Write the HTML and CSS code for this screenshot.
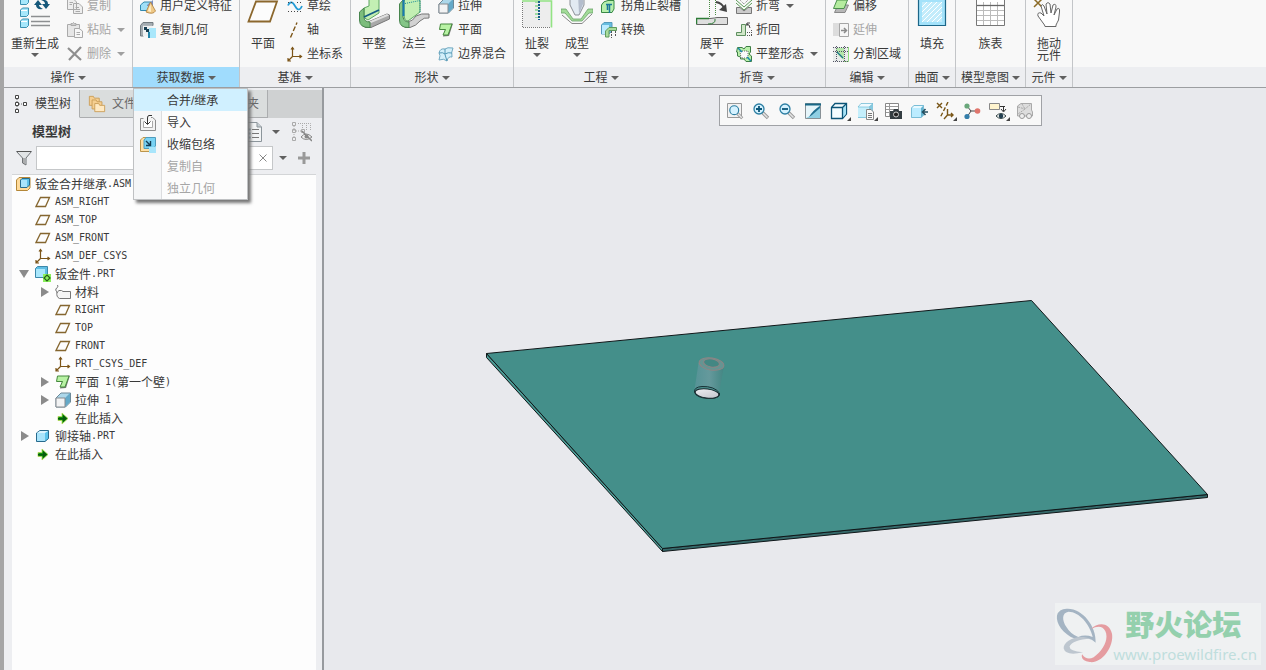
FILE: index.html
```html
<!DOCTYPE html>
<html lang="zh-CN">
<head>
  <meta charset="utf-8">
  <meta name="viewport" content="width=device-width, initial-scale=1">
  <title>钣金合并继承</title>
  <link rel="stylesheet" href="styles.css">
</head>
<body>

<!-- shared icons -->
<svg class="defs" aria-hidden="true">
  <symbol id="plane" viewBox="0 0 16 16"><path d="M1 12.500H10.500L14.500 3.500H5.500Z" fill="none" stroke="#85662f" stroke-width="1.300"/></symbol>
  <symbol id="csys" viewBox="0 0 16 16"><path d="M5.500 2V10.500H14M5.500 10.500L1.500 14.500M4 3.500L5.500 1.500L7 3.500M12.500 9L14.500 10.500L12.500 12M1 12V15H4" fill="none" stroke="#7c5518" stroke-width="1.200"/></symbol>
  <symbol id="cube" viewBox="0 0 16 16"><path d="M1.500 5L5 2.500H13.500V10.500L10 13.500H1.500Z" fill="#5cc4ec" stroke="#276a8d"/><path d="M2 5H10V13H2Z" fill="#a9e4fb"/><path d="M2 5L5 3H13L10 5Z" fill="#dcf5ff"/></symbol>
  <symbol id="insert" viewBox="0 0 16 16"><path d="M3 6.500H7V3L13 8.500L7 14V10.500H3Z" fill="#0b9410" stroke="#b5d957" stroke-width="0.800"/><path d="M3 8H8V5L12 8.500L8 12V9.500H3Z" fill="#075c0c"/></symbol>
  <symbol id="flat" viewBox="0 0 16 16"><path d="M3 3L15 1.500L11 14L5 14.500L7 8L2 8Z" fill="#797979"/><path d="M2.500 2H14L10 13H5L7.500 7.500H1.500Z" fill="#b8f2a4" stroke="#468a3e"/></symbol>
  <symbol id="extrude" viewBox="0 0 16 16"><path d="M1 6L6 1H15.500V10L10.500 15H1Z" fill="#acd7ea" stroke="#6c8998"/><path d="M10 6L15 1V10L10 15Z" fill="#64a9c8"/><path d="M1 6H10V15H1Z" fill="#f2f3f4" stroke="#868b90"/></symbol>
  <symbol id="lens" viewBox="0 0 18 18"><path d="M10.500 10.500L16 16" stroke="#999" stroke-width="3.400"/><path d="M11 11L15.500 15.500" stroke="#e5e5e5" stroke-width="1.500"/><circle cx="7" cy="7" r="5" fill="#d5f2ff" stroke="#2c7ea2" stroke-width="1.300"/></symbol>
</svg>

<div class="app">

  <header class="ribbon">
    <section class="group">
      <div class="tools">
        <button class="big wide">
          <svg viewBox="0 0 32 34"><g fill="#a6e7fb" stroke="#3a8fb0"><path d="M1.500 5L3.500 3H9.500V8.500L7.500 10.500H1.500Z"/><path d="M1.500 16L3.500 14H9.500V20.500L7.500 22.500H1.500Z"/><path d="M1.500 27L3.500 25H9.500V31.500L7.500 33.500H1.500Z"/></g><g stroke="#fff"><path d="M2 5.500H8M2 16.500H8M2 27.500H8"/></g><path d="M15 11L19 6L23 11H20Q20 13 24 15Q17 16 17 11ZM31 10L27 15L23 10H26Q26 7 22 6Q29 5 29 10Z" fill="#15587a"/><path d="M12 22.500H31M12 27.500H31M12 31.500H31" stroke="#8d8f91" stroke-width="1.500"/></svg>
          <span>重新生成</span><i class="caret"></i>
        </button>
        <div class="stack">
          <button class="small" disabled><svg viewBox="0 0 16 16"><path d="M.5 1.500H7L9.500 4V11.500H.5ZM6.500 5.500H12L15.500 9V15.500H6.500Z" fill="#eee" stroke="#aaa"/><path d="M8.500 9.500H12M8.500 11.500H13M8.500 13.500H13M2.500 4.500H6M2.500 6.500H5" stroke="#aaa"/></svg>复制</button>
          <button class="small" disabled><svg viewBox="0 0 16 16"><path d="M.5 2.500H12.500V14.500H.5Z" fill="#e6e6e6" stroke="#aaa"/><path d="M4 3.500V1.500H5.500L6.500 .5L7.500 1.500H9V3.500Z" fill="#ccc" stroke="#aaa"/><path d="M7.500 6.500H12L15.500 9V15.500H7.500Z" fill="#f7f7f7" stroke="#aaa"/><path d="M9.500 10.500H13M9.500 12.500H13" stroke="#aaa"/></svg>粘贴<i class="caret"></i></button>
          <button class="small" disabled><svg viewBox="0 0 16 16"><path d="M1 2L14 14M14 1L2 14" stroke="#8f8f8f" stroke-width="2.200"/></svg>删除<i class="caret"></i></button>
        </div>
      </div>
      <button class="caption">操作<i class="caret"></i></button>
    </section>

    <section class="group open">
      <div class="tools">
        <div class="stack">
          <button class="small"><svg viewBox="0 0 16 16"><path d="M.5 7L4 4H11V10L8 12.500H.5Z" fill="#9fdff7" stroke="#3289ae"/><path d="M7 7L13 2V8H7Z" fill="#7d8fc1"/><path d="M10.500 4L15.500 13Q13 17 6 14Z" fill="#efc987" stroke="#ae7e38" stroke-width=".8"/><path d="M10.500 6L11 14L8 13Z" fill="#fff0cd"/></svg>用户定义特征</button>
          <button class="small"><svg viewBox="0 0 16 16"><path d="M.5 3.500L3 .5H13V3.500H3.500V14H.5Z" fill="#a5adb2" stroke="#737b80"/><path d="M3 3.500H12.500V14H3Z" fill="#eff1f2"/><path d="M4 5H7V7H9V10H6V8H4Z" fill="#173d50"/><path d="M9 6H16V16H9Z" fill="#a9e7fb"/><path d="M8 10H10V16H8Z" fill="#2485aa"/></svg>复制几何</button>
          <span class="small"></span>
        </div>
      </div>
      <button class="caption">获取数据<i class="caret"></i></button>
      <div class="menu">
        <button class="current"><i></i>合并/继承</button>
        <button><svg viewBox="0 0 16 16"><path d="M3.500 3.500H.5V15.500H15.500V5L12.500 2.500H11" fill="#f3f3f3" stroke="#8e8e8e"/><path d="M3.500 6.500V12.500H12.500V6" fill="#fff" stroke="#aaa"/><path d="M12 .5H9Q7.500 .5 7.500 3V9M4.500 6.500L7.500 9.500L10.500 6.500" fill="none" stroke="#333"/></svg>导入</button>
        <button><svg viewBox="0 0 16 16"><path d="M.5 3L3 .5H13V14.500H.5Z" fill="#ffe0a5" stroke="#bb954b"/><path d="M4 3L6 .5H15.500V9L13 11.500H4Z" fill="#79d3f4" stroke="#4f9cbc"/><path d="M6 4L10 8M10.500 4V8.500H6" stroke="#133c53" stroke-width="1.400" fill="none"/><path d="M9 10H16V16H9Z" fill="#a8e5fb"/></svg>收缩包络</button>
        <button disabled><i></i>复制自</button>
        <button disabled><i></i>独立几何</button>
      </div>
    </section>

    <section class="group">
      <div class="tools">
        <button class="big"><svg viewBox="0 0 32 34"><path d="M1.500 27.500H23L30 7.500H9Z" fill="#fcfcfc" stroke="#8b672d" stroke-width="1.800"/></svg><span>平面</span></button>
        <div class="stack">
          <button class="small"><svg viewBox="0 0 16 16"><path d="M1 7.500Q4 1 8 8T15 8" fill="none" stroke="#239bd5" stroke-width="1.700"/><path d="M1 13.500H15M1 4.500H5M10 4.500H15" stroke="#444" stroke-dasharray="1 2"/></svg>草绘</button>
          <button class="small"><svg viewBox="0 0 16 16"><path d="M3.500 15.500L10 .5" stroke="#7c5518" stroke-width="1.400" stroke-dasharray="5 2"/></svg>轴</button>
          <button class="small"><svg><use href="#csys"/></svg>坐标系</button>
        </div>
      </div>
      <button class="caption">基准<i class="caret"></i></button>
    </section>

    <section class="group">
      <div class="tools">
        <button class="big"><svg viewBox="0 0 32 34"><path d="M6 14L11 12V4L21 0V19L10 26Q6 25 6 21Z" fill="#c3efb3" stroke="#5ca561"/><path d="M10 28L29 20L31.500 21V25L13 33.500H7Z" fill="#a9a9a9" stroke="#777"/><path d="M10 28L29 20L31 21.500L13 29Z" fill="#e0e0e0"/><path d="M1.500 18L6 14V23Q6 28 12 28V33.500Q1.500 34 1.500 26Z" fill="#7cbd7c" stroke="#47854d"/><path d="M6 23L21 16" stroke="#145c85" stroke-width="1.800"/></svg><span>平整</span></button>
        <button class="big"><svg viewBox="0 0 32 34"><path d="M6 8L8 2L22 1V18L10 27Q6 27 6 20Z" fill="#c3efb3" stroke="#5ca561"/><path d="M10 28Q15 27 18 22Q23 19 31 20V24Q26 23 22 27Q18 32 12 33.500H7Z" fill="#d2d2d2" stroke="#777"/><path d="M1.500 10L5 6V23Q6 28 11 28V33.500Q1.500 34 1.500 26Z" fill="#84c587" stroke="#47854d"/><path d="M5.500 6V22" stroke="#197ab2" stroke-width="2"/><path d="M7 9.500L22 6.500V19" fill="none" stroke="#168997" stroke-dasharray="1 1"/></svg><span>法兰</span></button>
        <div class="stack">
          <button class="small"><svg><use href="#extrude"/></svg>拉伸</button>
          <button class="small"><svg><use href="#flat"/></svg>平面</button>
          <button class="small"><svg viewBox="0 0 16 16"><path d="M1 7Q2 2 7 3Q9 1 15 2Q13 6 14 11Q10 10 9 15Q6 12 1 14Q3 9 1 7Z" fill="#d3effa" stroke="#72a9c1"/><path d="M7 3Q6 8 9 15M1 7Q5 6 7 8Q10 6 14 7" fill="none" stroke="#5198b6"/></svg>边界混合</button>
        </div>
      </div>
      <button class="caption">形状<i class="caret"></i></button>
    </section>

    <section class="group">
      <div class="tools">
        <button class="big"><svg viewBox="0 0 32 34"><path d="M2 5H30V33H2Z" fill="#ededed"/><path d="M1 7H30.500V33.500" fill="none" stroke="#93e484" stroke-width="1.600"/><path d="M1.500 8V33.500H30" fill="none" stroke="#777" stroke-dasharray="1 1"/><path d="M15.500 7V24" stroke="#9fdca2" stroke-width="3" stroke-dasharray="2 2"/><path d="M18 7V26" stroke="#155e89" stroke-width="2" stroke-dasharray="2 1"/></svg><span>扯裂</span><i class="caret"></i></button>
        <button class="big"><svg viewBox="0 0 32 34"><path d="M0 15H5L12 25H20L27 15H32V19H28L21 27H11L4 19H0Z" fill="#a3db98" stroke="#6ba36a" stroke-width=".8"/><path d="M9 0H23V11L18 21H14L9 11Z" fill="#e2eaf2" stroke="#8b8f96"/><path d="M17 0H22V10L18 20Z" fill="#b4bdcc"/><path d="M1 21L11 29.500H21L31 20" fill="none" stroke="#888"/></svg><span>成型</span><i class="caret"></i></button>
        <div class="stack">
          <button class="small"><svg viewBox="0 0 16 16"><path d="M.5 14.500V7Q2 3 7 2.500H13V11L11 14.500Z" fill="#b7efad" stroke="#398844"/><path d="M5 6.500H11M8.500 7V15M6.500 7V12" stroke="#1c779b" stroke-width="1.500"/></svg>拐角止裂槽</button>
          <button class="small"><svg viewBox="0 0 16 16"><path d="M.5 3L3 .5H11V9L8 12H.5Z" fill="#67bddf" stroke="#569abb"/><path d="M1 3H8V12H1Z" fill="#bcebff"/><path d="M4.500 15V9L8 5.500H15.500V8.500H8V15Z" fill="#a9dc9c" stroke="#5f9b5c"/><path d="M10.500 9V16M14.500 9V15" stroke="#555" stroke-dasharray="2 1"/></svg>转换</button>
          <span class="small"></span>
        </div>
      </div>
      <button class="caption">工程<i class="caret"></i></button>
    </section>

    <section class="group">
      <div class="tools">
        <button class="big"><svg viewBox="0 0 32 34"><path d="M13.500 0V23M19.500 0V21" stroke="#4a8b44" stroke-dasharray="1 1"/><path d="M.5 24.500H14Q19 24 21 23.500H31.500V30.500H.5Z" fill="#dedede" stroke="#666"/><path d="M.5 30V24.500H13" fill="none" stroke="#2e7c37" stroke-width="1.500"/><path d="M19 25Q20 30 12 30" fill="none" stroke="#2e7c37"/><path d="M20 8Q26 9 28 14" fill="none" stroke="#444" stroke-width="2"/><path d="M23 16L31 18L30 10Z" fill="#444"/></svg><span>展平</span><i class="caret"></i></button>
        <div class="stack">
          <button class="small"><svg viewBox="0 0 16 16"><path d="M0 2L8 9L16 2M0 5L8 12L16 5" fill="none" stroke="#5c9c58"/><path d="M3 1L8 6L13 1" fill="none" stroke="#777" stroke-dasharray="1 1"/><path d="M.5 9.500H4L8 13L12 9.500H15.500V15.500H.5Z" fill="#ccc" stroke="#777"/></svg>折弯<i class="caret"></i></button>
          <button class="small"><svg viewBox="0 0 16 16"><path d="M.5 10.500H5.500V2.500H9.500V13.500H.5Z" fill="#d0e6c8" stroke="#5e8f60"/><path d="M11 13.500H16M15.500 8V14M11 10.500H15" stroke="#555" stroke-dasharray="1 1"/><path d="M10 2Q14 2 14 6M11 4V1L14 1" fill="none" stroke="#444"/></svg>折回</button>
          <button class="small"><svg viewBox="0 0 16 16"><path d="M1.500 1.500H6L8 3L10 .5H14.500V6L13 8L15.500 10V15.500H10L8 13H4.500V11L1.500 10V6H.5Z" fill="#b9f0aa" stroke="#3e7e45"/><path d="M4 5H12V12H5Z" fill="#fafafa" stroke="#666" stroke-dasharray="1 1"/><path d="M2 2L6 6M11 11L15 15" stroke="#168aaa" stroke-width="1.500"/></svg>平整形态<i class="caret"></i></button>
        </div>
      </div>
      <button class="caption">折弯<i class="caret"></i></button>
    </section>

    <section class="group">
      <div class="tools">
        <div class="stack">
          <button class="small"><svg viewBox="0 0 16 16"><path d="M5 7H15.500L12 14.500H1.500Z" fill="#b7b7b7" stroke="#888"/><path d="M4 2H14.500L11 10.500H.5Z" fill="#b5ec9f" stroke="#4a8f4c"/></svg>偏移</button>
          <button class="small" disabled><svg viewBox="0 0 16 16"><path d="M0 1H6V14H0Z" fill="#ddd"/><path d="M6.500 1.500H15.500V14.500H6.500Z" fill="#f6f6f6" stroke="#a5a5a5"/><path d="M8 8.500H13M11 6L13.500 8.500L11 11" fill="none" stroke="#8a8a8a" stroke-width="1.500"/></svg>延伸</button>
          <button class="small"><svg viewBox="0 0 16 16"><path d="M0 1H16V16H0Z" fill="#e8ecea"/><path d="M3 2H11V14Q3 9 3 3Z" fill="#b5e8aa"/><path d="M15.500 1V15.500H11" fill="none" stroke="#8fdc7d"/><path d="M0 1.500H16M0 5.500H16M3.500 0V16M11.500 0V16M0 15.500H16" stroke="#556" stroke-dasharray="1 1"/><path d="M4 6L10 12" stroke="#1b7189" stroke-width="1.300"/></svg>分割区域</button>
        </div>
      </div>
      <button class="caption">编辑<i class="caret"></i></button>
    </section>

    <section class="group">
      <div class="tools">
        <button class="big"><svg viewBox="0 0 32 34"><path d="M2.500 4.500H29.500V31.500H2.500Z" fill="#a3e2fa" stroke="#1c6688" stroke-width="1.200"/><path d="M6 8H26V28H6Z" fill="#c2ecfb"/><g stroke="#fff"><path d="M6 13L11 8M6 18L16 8M6 23L21 8M6 28L26 8M11 28L26 13M16 28L26 18M21 28L26 23"/></g></svg><span>填充</span></button>
      </div>
      <button class="caption">曲面<i class="caret"></i></button>
    </section>

    <section class="group">
      <div class="tools center">
        <button class="big"><svg viewBox="0 0 32 34"><path d="M1.500 3.500H29.500V31.500H1.500Z" fill="#fff" stroke="#777"/><path d="M2 16.500H29M2 21.500H29M2 26.500H29M8.500 8V31M15.500 8V31M22.500 8V31" stroke="#bbb"/><path d="M2 11.500H29" stroke="#666" stroke-width="1.300"/></svg><span>族表</span></button>
      </div>
      <button class="caption">模型意图<i class="caret"></i></button>
    </section>

    <section class="group">
      <div class="tools">
        <button class="big"><svg viewBox="0 0 32 34"><path d="M1 5L9 13M9 5L1 13" stroke="#8b6b26" stroke-width="1.500"/><path d="M11.500 31L5 22Q4 18 8 19L11 22L8 12Q9 9 11 12L14 20L13 10Q15 7 17 10L18 19L20 11Q23 9 23 13L21 21L24 15Q27 13 26.500 18L25.500 26Q24 29 23 31V32.500H12Z" fill="#fff" stroke="#666"/></svg><span>拖动<br>元件</span></button>
      </div>
      <button class="caption">元件<i class="caret"></i></button>
    </section>
  </header>

  <div class="workspace">
    <aside class="side">
      <nav class="tabs">
        <button class="tab active"><svg viewBox="0 0 16 18"><path d="M2.500 .5H5.500V3.500H2.500ZM2.500 7.500H5.500V10.500H2.500ZM10.500 7.500H13.500V10.500H10.500ZM2.500 14.500H5.500V17.500H2.500Z" fill="#fff" stroke="#444"/><path d="M4 4V7M4 11V14M6 9H10" stroke="#666" stroke-dasharray="1 1"/></svg>模型树</button>
        <button class="tab"><svg class="folders" viewBox="0 0 20 20"><g fill="#f6cf91" stroke="#c99d57"><path d="M1.500 1.500H6L7 3.500H12.500V11.500H1.500Z"/><path d="M4.500 5.500H9L10 7.500H15.500V15.500H4.500Z"/><path d="M7.500 9.500H12L13 11.500H18.500V18.500H7.500Z" fill="#ffe9c2"/></g></svg>文件夹浏览器</button>
        <button class="tab"><svg viewBox="0 0 16 18"><path d="M8 2L10 7H15L11 10L13 16L8 12L3 16L5 10L1 7H6Z" fill="#f6cf91" stroke="#b58538"/></svg>收藏夹</button>
      </nav>

      <div class="tree-head">
        <h2>模型树</h2>
        <button class="icon" aria-label="设置"><svg viewBox="0 0 16 20"><path d="M.5 .5H11L15.500 5V19.500H.5Z" fill="#f2f4f5" stroke="#8c959b"/><path d="M11 .5V5H15.500" fill="#c4ccd0" stroke="#8c959b"/><path d="M6 7.500H13M6 11.500H13M6 15.500H13" stroke="#777"/><path d="M2.500 7.500H4.500M2.500 11.500H4.500M2.500 15.500H4.500" stroke="#55849b" stroke-width="2"/></svg></button>
        <i class="caret"></i>
        <button class="icon eye" aria-label="显示"><svg viewBox="0 0 20 20"><g fill="none" stroke="#aaa"><path d="M.5 .5H3.500V3.500H.5ZM.5 7.500H3.500V10.500H.5ZM9.500 7.500H12.500V10.500H9.500ZM.5 15.500H3.500V18.500H.5Z"/><path d="M2 4V15M4 9H9M6 1.500H18.500V9M10.500 1V7M14.500 1V8" stroke-dasharray="1 1"/></g><path d="M9 15Q14 9 20 15Q14 20 9 15Z" fill="#eee" stroke="#888"/><circle cx="14.500" cy="14.500" r="2" fill="#888"/><path d="M10 9L20 19" stroke="#888" stroke-width="1.500"/></svg></button>
      </div>

      <div class="search">
        <svg class="funnel" viewBox="0 0 16 16"><path d="M.5 1.500H15.500L10 8V15L6.500 13V8Z" fill="#e1e4e6" stroke="#6f7376"/><path d="M8 8V14" stroke="#777"/><path d="M1 1.500H15" stroke="#555"/></svg>
        <label class="box"><input type="text" aria-label="搜索"><button aria-label="清除"><svg viewBox="0 0 8 8"><path d="M.5 .5L7.500 7.500M7.500 .5L.5 7.500" stroke="#888"/></svg></button></label>
        <i class="caret"></i>
        <button class="icon plus" aria-label="添加"><svg viewBox="0 0 12 12"><path d="M6 0V12M0 6H12" stroke="#999" stroke-width="3"/></svg></button>
      </div>

      <div class="tree">
        <div class="row root"><svg viewBox="0 0 16 16"><path d="M1.500 4L4 1.500H15V12L12.500 14.500H1.500Z" fill="#ffdb9b" stroke="#b48738"/><path d="M5.500 4L7 2.500H14.500V9L12 11.500H5.500Z" fill="#60c2e9" stroke="#276c8f"/><path d="M6 4H12V11H6Z" fill="#a8e4fc"/></svg><span class="cn">钣金合并继承</span>.ASM</div>
        <ul>
          <li class="row"><svg><use href="#plane"/></svg>ASM_RIGHT</li>
          <li class="row"><svg><use href="#plane"/></svg>ASM_TOP</li>
          <li class="row"><svg><use href="#plane"/></svg>ASM_FRONT</li>
          <li class="row"><svg><use href="#csys"/></svg>ASM_DEF_CSYS</li>
          <li>
            <div class="row expanded"><svg viewBox="0 0 16 16"><path d="M.5 2.500L2.500 .5H12.500V9.500L10.500 11.500H.5Z" fill="#60bee4" stroke="#3c88aa"/><path d="M1 3H10V11H1Z" fill="#a9e7fc"/><path d="M8 8H16V16H8Z" fill="#8af05c"/><path d="M12 9L15 12L12 15L9 12Z" fill="none" stroke="#245f16" stroke-width="1.200"/></svg><span class="cn">钣金件</span>.PRT</div>
            <ul>
              <li class="row closed"><svg viewBox="0 0 16 16"><path d="M2.500 1Q4 3 1.500 4Q-.5 6 2 8Q1 13 4.500 14.500H15.500V7.500H8L6.500 6.500H4Q2 8 2 9" fill="#f5f5f5" stroke="#777"/></svg><span class="cn">材料</span></li>
              <li class="row"><svg><use href="#plane"/></svg>RIGHT</li>
              <li class="row"><svg><use href="#plane"/></svg>TOP</li>
              <li class="row"><svg><use href="#plane"/></svg>FRONT</li>
              <li class="row"><svg><use href="#csys"/></svg>PRT_CSYS_DEF</li>
              <li class="row closed"><svg><use href="#flat"/></svg><span class="cn">平面</span>&nbsp;1(<span class="cn">第一个壁</span>)</li>
              <li class="row closed"><svg><use href="#extrude"/></svg><span class="cn">拉伸</span>&nbsp;1</li>
              <li class="row"><svg><use href="#insert"/></svg><span class="cn">在此插入</span></li>
            </ul>
          </li>
          <li class="row closed"><svg><use href="#cube"/></svg><span class="cn">铆接轴</span>.PRT</li>
          <li class="row"><svg><use href="#insert"/></svg><span class="cn">在此插入</span></li>
        </ul>
      </div>
    </aside>

    <main class="view">
      <!-- sheet metal plate with the rivet shaft -->
      <svg class="model" viewBox="324 88 942 582">
        <defs>
          <linearGradient id="shaft"><stop offset="0" stop-color="#559396"/><stop offset=".5" stop-color="#65999c"/><stop offset="1" stop-color="#438683"/></linearGradient>
          <linearGradient id="hole" x1="0" y1="0" x2="1" y2="1"><stop offset="0" stop-color="#f0f1f5"/><stop offset="1" stop-color="#bfc1c9"/></linearGradient>
        </defs>
        <g stroke="#101719" stroke-width="1" stroke-linejoin="round">
          <path d="M486.500 353.500L662.500 548.500V551.500L486.500 357.500Z" fill="#4b9c96"/>
          <path d="M662.500 548.500L1207.500 494.500V497.500L662.500 551.500Z" fill="#36696a"/>
          <path d="M486.500 353.500L1031.500 300.500L1207.500 494.500L662.500 548.500Z" fill="#448f8a"/>
        </g>
        <path d="M698.500 363L694.500 390Q706 382 719 393L724 366Z" fill="url(#shaft)"/>
        <g fill="none" stroke="#8d8585">
          <ellipse cx="711.500" cy="364" rx="12.500" ry="6" transform="rotate(9 711.500 364)" fill="#669492"/>
          <ellipse cx="711.500" cy="363" rx="8" ry="4" transform="rotate(9 711.500 363)" fill="#438783"/>
        </g>
        <path d="M694.500 392Q694 387 702 386.500Q714 386 719.500 393V395Q718 398.500 709 398.500Q696 398 694.500 392Z" fill="#4b8f8d" stroke="#183236"/>
        <ellipse cx="707" cy="393.500" rx="12" ry="4.500" transform="rotate(7 707 393.500)" fill="url(#hole)" stroke="#14262b"/>
      </svg>

      <div class="viewbar">
        <button aria-label="重新调整"><svg viewBox="0 0 18 18"><path d="M1.500 1.500H15.500V15.500H1.500Z" fill="#f2f2f2" stroke="#999"/><use href="#lens" x="2" y="2" width="16" height="16"/></svg></button>
        <button aria-label="放大"><svg viewBox="0 0 18 18"><use href="#lens" width="18" height="18"/><path d="M4 7H10M7 4V10" stroke="#0b5679" stroke-width="1.800"/></svg></button>
        <button aria-label="缩小"><svg viewBox="0 0 18 18"><use href="#lens" width="18" height="18"/><path d="M4 7H10" stroke="#0b5679" stroke-width="1.800"/></svg></button>
        <button aria-label="重画"><svg viewBox="0 0 18 18"><path d="M1.500 1.500H16.500V16.500H1.500Z" fill="#8fcfe3" stroke="#889196"/><path d="M2 3H16L6 14L2 16Z" fill="#e6f5fa"/><path d="M1 2.500H17" stroke="#196887" stroke-width="2"/><path d="M16 4Q9 8 5 15L8 13L16 6Z" fill="#226f90"/></svg></button>
        <button class="more" aria-label="显示样式"><svg viewBox="0 0 18 18"><path d="M1.500 5.500L5 1.500H16.500V12L12.500 16.500H1.500Z" fill="#f3fcff" stroke="#0d5577" stroke-width="1.300"/><path d="M12.500 6V16L16 12V2Z" fill="#a6e2f6"/><path d="M2 5.500H12.500L16 2M12.500 5.500V16" fill="none" stroke="#0d5577" stroke-width="1.300"/></svg></button>
        <button class="more" aria-label="已保存方向"><svg viewBox="0 0 18 18"><path d="M1 5L4 1.500H16V12L12 16H1Z" fill="#87c9df"/><path d="M1 5H12V15H1Z" fill="#c5effc"/><path d="M1 5L4 1.500H16L12 5Z" fill="#effaff" stroke="#60b2ce" stroke-width=".6"/><path d="M9.500 7.500H14L16.500 10V17.500H9.500Z" fill="#fafafa" stroke="#888"/><path d="M11 11.500H15M11 13.500H15M11 15.500H15" stroke="#777"/></svg></button>
        <button aria-label="视图管理器"><svg viewBox="0 0 18 18"><path d="M1.500 1.500H14.500V14.500H1.500Z" fill="#fff" stroke="#888"/><path d="M2 4.500H14M2 7.500H14M2 10.500H14M5.500 2V14" stroke="#999"/><path d="M6 9H9L10 7H14L15 9H18V17H6Z" fill="#343d42"/><circle cx="12" cy="12.500" r="2.500" fill="#222" stroke="#ccc"/></svg></button>
        <button aria-label="透视图"><svg viewBox="0 0 18 18"><path d="M1 6L4 3H14V13L11 16H1Z" fill="#62b3d0"/><path d="M1 6H11V16H1Z" fill="#bcecff"/><path d="M1 6L4 3H14L11 6Z" fill="#e8f9ff"/><path d="M1.500 6L4 3.500H13.500V13L11 15.500H1.500Z" fill="none" stroke="#7abdd6"/><path d="M18 10H13M15.500 7L12.500 10L15.500 13" fill="none" stroke="#244f60" stroke-width="1.600"/></svg></button>
        <button class="more" aria-label="基准显示"><svg viewBox="0 0 18 18"><g fill="none" stroke="#795617" stroke-width="1.400"><path d="M1 1L6 6M6 1L1 6"/><path d="M12 0L4 16" stroke-dasharray="4 2"/><path d="M11.500 7V13H17M11.500 13L8 17M15 11L17 13L15 15"/></g></svg></button>
        <button aria-label="注释显示"><svg viewBox="0 0 18 18"><path d="M4 4L8 9L15 9M8 9L4 15" fill="none" stroke="#444"/><circle cx="4" cy="4" r="2.600" fill="#69a77a"/><circle cx="14.500" cy="9" r="2.800" fill="#df756c"/><circle cx="4" cy="14.500" r="2.600" fill="#347eaa"/></svg></button>
        <button class="more" aria-label="旋转中心"><svg viewBox="0 0 18 18"><path d="M.5 1.500H10.500V7.500H.5Z" fill="#fff4ce" stroke="#888"/><path d="M11 4.500H16M14.500 4V9M12 7L14.500 10L17 7" fill="none" stroke="#333"/><path d="M7 14Q12 9 17 14Q12 19 7 14Z" fill="#fff" stroke="#344"/><circle cx="12" cy="14" r="2.300" fill="#233f50"/></svg></button>
        <button aria-label="模拟" disabled><svg viewBox="0 0 18 18"><path d="M1.500 4L5 1.500H15.500V8L16.500 10V14H1.500Z" fill="#ddd" stroke="#aaa"/><path d="M2 5L9 7L15 2M6 2L9 7L2 12" fill="none" stroke="#aaa" stroke-dasharray="2 1"/><circle cx="6" cy="14" r="2.500" fill="#eee" stroke="#999"/><circle cx="13" cy="14" r="2.500" fill="#eee" stroke="#999"/></svg></button>
      </div>

      <div class="brand">
        <svg viewBox="0 0 60 60"><path fill-rule="evenodd" d="M12 4C28 3 43 22 42 39C38 34 29 33 21 35C8 30 1 19 2 11Q4 4 12 4ZM14 7C7 8 7 16 12 23Q16 30 24 33Q31 30 39 33C36 20 25 7 14 7Z" fill="#a4b4c3"/><path fill-rule="evenodd" d="M37 35C23 29 8 38 9 45Q11 53 29 49Q15 48 15 43Q18 36 37 35Z" fill="#bdc6cf"/><path fill-rule="evenodd" d="M37 25C44 18 56 17 59 30C61 44 48 61 36 59Q26 57 28 51Q33 58 40 54C50 47 56 35 52 27Q48 19 37 25Z" fill="#e59ca0"/></svg>
        <div><strong>野火论坛</strong><span>www.proewildfire.cn</span></div>
      </div>
    </main>
  </div>
</div>

</body>
</html>
```
FILE: styles.css
```css
*,
*::before,
*::after {
  box-sizing: border-box;
}

body {
  margin: 0;
  overflow: hidden;
  font-family: "Liberation Sans", "Noto Sans CJK SC", sans-serif;
  font-size: 12px;
  line-height: 16px;
  color: #3a3a3a;
}

button {
  margin: 0;
  padding: 0;
  border: 0;
  background: none;
  font: inherit;
  color: inherit;
  white-space: nowrap;
}

button:disabled {
  color: #a6a6a6;
}

svg {
  display: block;
  flex: none;
}

.defs {
  position: absolute;
  width: 0;
  height: 0;
}

.app {
  display: flex;
  flex-direction: column;
  height: 100vh;
  border-left: 4px solid #a5a5a5;
}

.caret {
  flex: none;
  width: 8px;
  border: 4px solid transparent;
  border-top-color: #606060;
  border-bottom: 0;
}

button:disabled .caret {
  border-top-color: #a0a0a0;
}

/* ribbon */
.ribbon {
  display: flex;
  flex: none;
  border-bottom: 1px solid #9c9ea1;
  background: linear-gradient(#f8f8f8 67px, #edeef1 67px);
}

.group {
  position: relative;
  display: flex;
  flex-direction: column;
  border-right: 1px solid #c3c5c8;
}

.tools {
  display: flex;
  align-items: flex-end;
  gap: 8px;
  height: 67px;
  padding: 0 7px 1px;
}

.tools.center {
  justify-content: center;
}

.stack {
  display: flex;
  flex-direction: column;
}

.small {
  display: flex;
  align-items: center;
  gap: 4px;
  height: 24px;
}

.small svg {
  width: 16px;
  height: 16px;
}

.small .caret {
  margin-left: 2px;
}

.big {
  display: flex;
  flex-direction: column;
  align-items: center;
  width: 32px;
  height: 72px;
  line-height: 12px;
}

.big.wide {
  width: 48px;
}

.big svg {
  width: 32px;
  height: 34px;
  margin-bottom: 10px;
}

.big .caret {
  margin-top: 3px;
}

.caption {
  display: flex;
  align-items: center;
  justify-content: center;
  gap: 3px;
  height: 20px;
  padding: 1px 5px 0;
}

.open .caption {
  background: #a0dcfd;
}

/* drop-down */
.menu {
  position: absolute;
  z-index: 2;
  top: 100%;
  left: 0;
  width: 115px;
  margin-top: 1px;
  border: 1px solid #bfc1c3;
  background: linear-gradient(90deg, #f5f6f7 27px, #dcdddf 27px, #dcdddf 28px, #fcfcfc 28px);
  box-shadow: 3px 3px 3px #777;
}

.menu button {
  display: flex;
  align-items: center;
  gap: 11px;
  width: 100%;
  height: 22px;
  padding: 1px 0 0 6px;
}

.menu .current {
  background: #d0f0ff;
}

.menu svg,
.menu i {
  width: 16px;
  height: 16px;
}

.workspace {
  display: flex;
  flex: 1;
  min-height: 0;
}

/* side panel */
.side {
  display: flex;
  flex: none;
  flex-direction: column;
  width: 320px;
  padding-top: 2px;
  border-right: 2px solid #979a9e;
  background: #edeef1;
}

.tabs {
  display: flex;
  height: 28px;
  background: #cfd1d2;
}

.tab {
  display: flex;
  align-items: center;
  gap: 6px;
  padding: 0 8px;
  border-right: 1px solid #abadaf;
  border-bottom: 1px solid #abadaf;
  background: #dadddd;
  color: #686868;
}

.tab svg {
  width: 16px;
  height: 18px;
}

.tab .folders {
  width: 18px;
  height: 20px;
}

.tab.active {
  padding-left: 9px;
  border-bottom-color: #edeef1;
  background: #edeef1;
  color: #3a3a3a;
}

.tree-head {
  display: flex;
  align-items: center;
  height: 28px;
  padding: 0 10px 0 28px;
}

.tree-head h2 {
  margin: 0 auto 0 0;
  font-size: 13px;
  line-height: 16px;
}

.icon svg {
  width: 20px;
  height: 20px;
}

.tree-head .caret {
  margin: 0 12px 0 8px;
}

.search {
  display: flex;
  align-items: center;
  height: 24px;
  padding: 0 12px;
}

.funnel {
  width: 16px;
  height: 16px;
}

.box {
  display: flex;
  flex: 1;
  align-items: center;
  height: 24px;
  margin: 0 6px 0 4px;
  border: 1px solid #c5c7c9;
  background: #fff;
}

.box input {
  flex: 1;
  min-width: 0;
  border: 0;
  outline: 0;
  background: none;
  font: inherit;
}

.box button svg {
  width: 8px;
  height: 8px;
  margin: 0 5px;
}

.plus {
  margin-left: 11px;
}

.plus svg {
  width: 12px;
  height: 12px;
}

.tree {
  flex: 1;
  margin: 4px 6px 0 8px;
  padding-left: 3px;
  border-top: 1px solid #d3d5d7;
  background: #fdfdfd;
  font-family: "DejaVu Sans Mono", "Noto Sans CJK SC", monospace;
  font-size: 10px;
}

.tree ul {
  margin: 0;
  padding: 0;
  list-style: none;
}

.tree ul ul {
  padding-left: 20px;
}

.row {
  display: flex;
  align-items: center;
  height: 18px;
  white-space: nowrap;
}

.row svg {
  width: 16px;
  height: 16px;
  margin-right: 4px;
}

.row::before {
  content: "";
  width: 20px;
}

.root::before {
  display: none;
}

.closed::before,
.expanded::before {
  width: 8px;
  margin: 0 6px;
  border: 5px solid transparent;
  border-right: 0;
  border-left: 8px solid #8b8b8b;
}

.expanded::before {
  width: 10px;
  margin: 0 6px 0 4px;
  border: 5px solid transparent;
  border-top: 8px solid #8b8b8b;
  border-bottom: 0;
}

.cn {
  font-family: "Noto Sans CJK SC", sans-serif;
  font-size: 12px;
}

/* graphics area */
.view {
  position: relative;
  flex: 1;
  min-width: 0;
  background: #e8e9ed;
}

.model {
  width: 100%;
}

.viewbar {
  position: absolute;
  top: 7px;
  left: 395px;
  display: flex;
  align-items: center;
  gap: 8px;
  height: 31px;
  padding: 0 7px 0 6px;
  border: 1px solid #a0a2a6;
  background: #f8f8f8;
}

.viewbar button {
  position: relative;
}

.viewbar svg {
  width: 18px;
  height: 18px;
}

.viewbar .more {
  margin-right: 1px;
}

/* small corner mark on buttons that open a list */
.more::after {
  content: "";
  position: absolute;
  right: -3px;
  bottom: -1px;
  border-bottom: 4px solid #444;
  border-left: 4px solid transparent;
}

.brand {
  position: absolute;
  right: 5px;
  bottom: 5px;
  display: flex;
  align-items: center;
  padding-right: 4px;
  background: #eff1f2;
}

.brand svg {
  width: 58px;
  height: 62px;
}

.brand div {
  display: flex;
  flex-direction: column;
}

.brand strong {
  padding-left: 12px;
  font-family: "Noto Sans CJK SC", sans-serif;
  font-size: 29px;
  font-weight: 900;
  line-height: 40px;
  color: #94d0ad;
}

.brand span {
  font-family: "Noto Sans", sans-serif;
  font-size: 15px;
  line-height: 22px;
  color: #bfdedd;
}
```
